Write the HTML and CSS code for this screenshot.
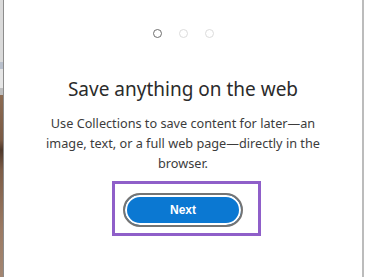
FILE: index.html
```html
<!DOCTYPE html>
<html lang="en">
<head>
<meta charset="utf-8">
<title>Collections</title>
<link rel="stylesheet" href="styles.css">
</head>
<body>
<div class="page">
  <div class="backdrop"></div>
  <main class="dialog">
    <div class="dots">
      <span class="dot active"></span>
      <span class="dot"></span>
      <span class="dot"></span>
    </div>
    <h1 class="title">Save anything on the web</h1>
    <p class="desc">Use Collections to save content for later—an image, text, or a full web page—directly in the browser.</p>
    <div class="highlight">
      <button class="next">Next</button>
    </div>
  </main>
</div>
</body>
</html>
```
FILE: styles.css
```css
html, body {
  margin: 0;
  padding: 0;
  height: 100%;
  background: #ffffff;
}
.page {
  display: flex;
  height: 277px;
  width: 365px;
  overflow: hidden;
}
.backdrop {
  width: 3px;
  flex: none;
  background: linear-gradient(to bottom,
    #dadada 0, #dadada 62px,
    #b9c0cc 62px, #b9c0cc 69px,
    #e6e6e6 69px, #e6e6e6 88px,
    #bdbdbd 88px, #bdbdbd 95px,
    #8c6b52 95px, #7a5a44 140px,
    #4e382a 150px, #7d5d47 170px,
    #9b7a63 230px, #a38672 277px);
}
.dialog {
  flex: 1;
  background: #ffffff;
  border-left: 1px solid #8c8c8c;
  border-right: 2px solid #bcbcbc;
  margin-right: 1px;
  display: flex;
  flex-direction: column;
  align-items: center;
  padding-top: 29px;
  font-family: "Noto Sans", "Open Sans", sans-serif;
}
.dots {
  display: flex;
  gap: 17px;
}
.dot {
  width: 9px;
  height: 9px;
  box-sizing: border-box;
  border-radius: 50%;
  border: 1.5px solid #dcdcdc;
}
.dot.active {
  border-color: #6e6e6e;
}
.title {
  margin: 38px 0 0;
  font-size: 19px;
  font-weight: 400;
  color: #2b2b2b;
  line-height: 26px;
}
.desc {
  margin: 11px 0 0;
  width: 292px;
  text-align: center;
  font-size: 12.7px;
  line-height: 20px;
  color: #3c3c3c;
}
.highlight {
  margin-top: 8px;
  border: 3px solid #8f5fc9;
  padding: 9px 15px 6px 8px;
  margin-left: 7px;
}
.next {
  display: block;
  width: 120px;
  height: 34px;
  border-radius: 17px;
  border: 2px solid #747474;
  box-shadow: inset 0 0 0 2px #ffffff;
  background: #0b78d2;
  color: #ffffff;
  font-family: "Liberation Sans", Arial, sans-serif;
  font-weight: 700;
  font-size: 12px;
  padding: 0;
}
```
